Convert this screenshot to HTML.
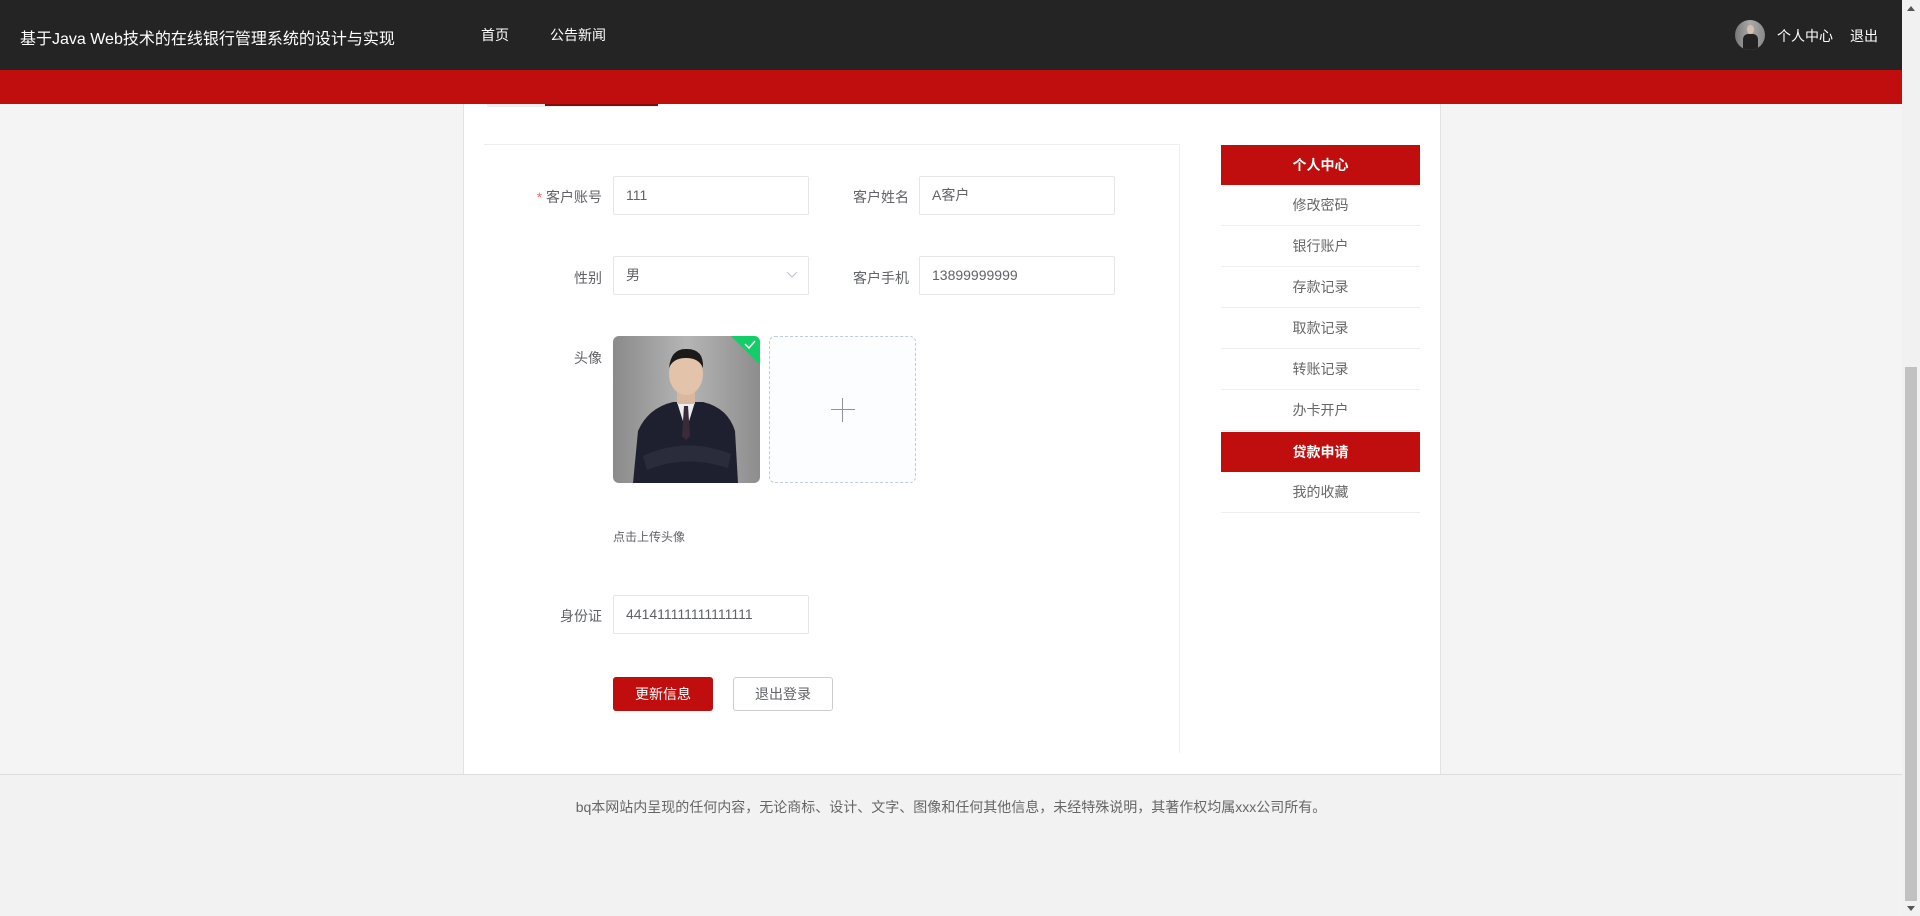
<!DOCTYPE html>
<html><head><meta charset="utf-8"><style>
*{box-sizing:border-box;margin:0;padding:0}
body{width:1920px;height:916px;overflow:hidden;background:#f4f4f4;font-family:"Liberation Sans","Noto Sans CJK SC",sans-serif;position:relative;color:#606266}
.abs{position:absolute}
.hdr{left:0;top:0;width:1902px;height:70px;background:#242424;color:#fff}
.red{left:0;top:70px;width:1902px;height:34px;background:#c00d0d}
.panel{left:463px;top:104px;width:978px;height:670px;background:#fff;border-left:1px solid #e2e2e2;border-right:1px solid #e2e2e2}
.lbl{font-size:14px;color:#606266;text-align:right;width:120px}
.inp{border:1px solid #e6e6e6;border-radius:2px;height:39px;width:196px;font-size:14px;color:#606266;padding-left:12px;line-height:37px}
.side{left:1221px;width:199px;height:41px;line-height:41px;text-align:center;font-size:14px;color:#666;border-bottom:1px solid #eee}
.side.on{background:#c00d0d;color:#fff;font-weight:bold;border:none;height:40px;line-height:40px}
.foot{left:0;top:774px;width:1902px;height:142px;background:#f2f2f2;border-top:1px solid #ddd;text-align:center;font-size:14px;color:#666;padding-top:22px}
</style></head><body>
<div class="abs hdr">
 <div class="abs" style="left:20px;top:25px;font-size:16px">基于Java Web技术的在线银行管理系统的设计与实现</div>
 <div class="abs" style="left:481px;top:25px;font-size:14px">首页</div>
 <div class="abs" style="left:550px;top:25px;font-size:14px">公告新闻</div>
 <div class="abs" style="left:1735px;top:20px;width:30px;height:30px;border-radius:50%;background:linear-gradient(90deg,#777,#aaa 50%,#888);overflow:hidden"><div style="position:absolute;left:12px;top:5px;width:7px;height:9px;background:#d8c0b0;border-radius:50%"></div><div style="position:absolute;left:8px;top:14px;width:15px;height:16px;background:#222;border-radius:5px 5px 0 0"></div></div>
 <div class="abs" style="left:1777px;top:26px;font-size:14px">个人中心</div>
 <div class="abs" style="left:1850px;top:26px;font-size:14px">退出</div>
</div>
<div class="abs red"></div>
<div class="abs" style="left:1902px;top:0;width:18px;height:916px;background:#f1f1f1"></div>
<div class="abs" style="left:1905px;top:367px;width:12px;height:534px;background:#c1c1c1"></div>
<div class="abs" style="left:1907px;top:6px;width:0;height:0;border-left:4px solid transparent;border-right:4px solid transparent;border-bottom:5px solid #555"></div>
<div class="abs" style="left:1907px;top:906px;width:0;height:0;border-left:4px solid transparent;border-right:4px solid transparent;border-top:5px solid #555"></div>
<div class="abs panel"></div>
<div class="abs" style="left:487px;top:104px;width:171px;height:3px;background:#eee"></div>
<div class="abs" style="left:545px;top:104px;width:113px;height:2px;background:#7a1010"></div>
<div class="abs" style="left:484px;top:144px;width:696px;height:1px;background:#eee"></div>
<div class="abs" style="left:1179px;top:144px;width:1px;height:609px;background:#eee"></div>

<div class="abs lbl" style="left:482px;top:187px"><span style="color:#f56c6c">* </span>客户账号</div>
<div class="abs inp" style="left:613px;top:176px">111</div>
<div class="abs lbl" style="left:789px;top:187px">客户姓名</div>
<div class="abs inp" style="left:919px;top:176px">A客户</div>

<div class="abs lbl" style="left:482px;top:268px">性别</div>
<div class="abs inp" style="left:613px;top:256px">男<svg class="abs" style="right:10px;top:14px" width="12" height="8" viewBox="0 0 12 8"><path d="M1 1 L6 6 L11 1" stroke="#c0c4cc" fill="none" stroke-width="1"/></svg></div>
<div class="abs lbl" style="left:789px;top:268px">客户手机</div>
<div class="abs inp" style="left:919px;top:256px">13899999999</div>

<div class="abs lbl" style="left:482px;top:348px">头像</div>
<div class="abs" style="left:613px;top:336px;width:147px;height:147px;border-radius:6px;overflow:hidden;background:linear-gradient(90deg,#8a8a8a,#b5b5b5 50%,#8d8d8d)">
 <svg width="147" height="147" viewBox="0 0 147 147"><path d="M20 147 L25 95 Q35 72 60 66 L90 66 Q115 72 122 95 L125 147Z" fill="#1e2030"/><path d="M64 66 L73 95 L82 66Z" fill="#eee"/><path d="M71 70 L75 70 L77 100 L73 104 L69 100Z" fill="#3a2a3a"/><rect x="64" y="50" width="18" height="18" fill="#d9b8a0"/><ellipse cx="73" cy="38" rx="17" ry="21" fill="#e3c4ab"/><path d="M56 32 Q58 12 74 13 Q91 13 90 32 Q86 22 73 22 Q60 22 56 32Z" fill="#1a1a1a"/><path d="M30 120 Q73 100 118 118 L115 132 Q73 118 34 134Z" fill="#2a2c3c"/><path d="M118 0 L147 0 L147 29Z" fill="#13ce66"/><path d="M132 8 L136 12 L142 5" stroke="#fff" stroke-width="1.5" fill="none"/></svg>
</div>
<div class="abs" style="left:769px;top:336px;width:147px;height:147px;border:1px dashed #c0ccda;border-radius:6px;background:#fbfdff">
 <div class="abs" style="left:61px;top:72px;width:24px;height:1px;background:#8c939d"></div>
 <div class="abs" style="left:72px;top:61px;width:1px;height:24px;background:#8c939d"></div>
</div>
<div class="abs" style="left:613px;top:528px;font-size:12px;color:#606266">点击上传头像</div>

<div class="abs lbl" style="left:482px;top:606px">身份证</div>
<div class="abs inp" style="left:613px;top:595px">441411111111111111</div>

<div class="abs" style="left:613px;top:677px;width:100px;height:34px;background:#c00d0d;border-radius:3px;color:#fff;font-size:14px;text-align:center;line-height:34px">更新信息</div>
<div class="abs" style="left:733px;top:677px;width:100px;height:34px;border:1px solid #ccc;border-radius:3px;color:#606266;font-size:14px;text-align:center;line-height:32px">退出登录</div>

<div class="abs side on" style="top:145px">个人中心</div>
<div class="abs side" style="top:185px">修改密码</div>
<div class="abs side" style="top:226px">银行账户</div>
<div class="abs side" style="top:267px">存款记录</div>
<div class="abs side" style="top:308px">取款记录</div>
<div class="abs side" style="top:349px">转账记录</div>
<div class="abs side" style="top:390px">办卡开户</div>
<div class="abs side on" style="top:432px">贷款申请</div>
<div class="abs side" style="top:472px">我的收藏</div>

<div class="abs foot">bq本网站内呈现的任何内容，无论商标、设计、文字、图像和任何其他信息，未经特殊说明，其著作权均属xxx公司所有。</div>
</body></html>
